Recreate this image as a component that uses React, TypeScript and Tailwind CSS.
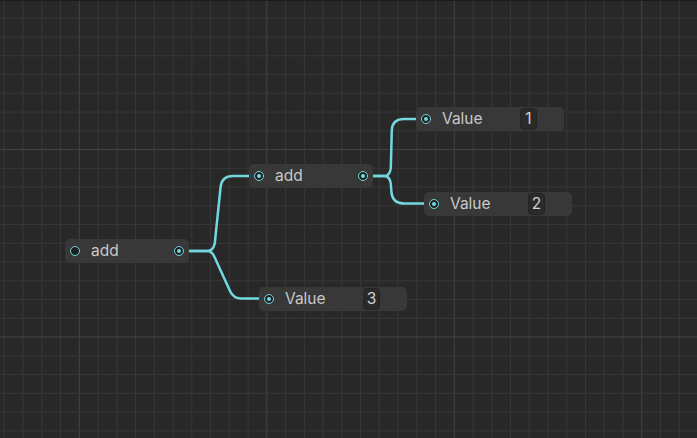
import React from "react";

const W = 697;
const H = 438;
const STEP = 18.75;

function Grid() {
  const vx: { x: number; major: boolean }[] = [];
  for (let k = -1; k < 40; k++) {
    const x = 4.3 + STEP * k;
    if (x < -2 || x > W + 2) continue;
    vx.push({ x, major: (k - 4) % 10 === 0 });
  }
  const hy: { y: number; major: boolean }[] = [];
  for (let k = 0; k < 26; k++) {
    const y = -0.45 + STEP * k;
    if (y < -2 || y > H + 2) continue;
    hy.push({ y, major: (k - 8) % 10 === 0 });
  }
  return (
    <svg className="absolute inset-0" width={W} height={H}>
      {vx.map((l, i) => (
        <line
          key={"v" + i}
          x1={l.x}
          x2={l.x}
          y1={0}
          y2={H}
          stroke={l.major ? "#434343" : "#373737"}
          strokeWidth={1}
        />
      ))}
      {hy.map((l, i) => (
        <line
          key={"h" + i}
          y1={l.y}
          y2={l.y}
          x1={0}
          x2={W}
          stroke={l.major ? "#434343" : "#373737"}
          strokeWidth={1}
        />
      ))}
      <line x1={0} x2={W} y1={0.5} y2={0.5} stroke="#1c1c1c" strokeWidth={1} />
    </svg>
  );
}

function Wires() {
  const c = "#72d8df";
  return (
    <svg className="absolute inset-0" width={W} height={H} fill="none">
      <path
        d="M180 251 L207 251 Q213.5 251 214.8 243 L220.6 187 Q221.8 176 233 176 L258 176"
        stroke={c}
        strokeWidth={2.5}
        strokeLinecap="round"
        strokeLinejoin="round"
      />
      <path
        d="M180 251 L207 251 Q212 251 214.5 257 L230 291 Q233.5 298.5 241 298.5 L268 298.5"
        stroke={c}
        strokeWidth={2.5}
        strokeLinecap="round"
        strokeLinejoin="round"
      />
      <path
        d="M363 176 L384 176 Q390 176 390.8 168 L391.8 130 Q392.5 119 404 119 L425 119"
        stroke={c}
        strokeWidth={2.5}
        strokeLinecap="round"
        strokeLinejoin="round"
      />
      <path
        d="M363 176 L384 176 Q390 176 390.8 184 L391.5 193 Q393 203.5 404 203.5 L433 203.5"
        stroke={c}
        strokeWidth={2.5}
        strokeLinecap="round"
        strokeLinejoin="round"
      />
    </svg>
  );
}

function Port({ connected }: { connected: boolean }) {
  return (
    <div className="w-[10px] h-[10px] shrink-0 rounded-full border-[1.5px] border-[#72d8df] bg-[#1f1f1f] flex items-center justify-center">
      {connected ? <div className="w-[4.5px] h-[4.5px] rounded-full bg-[#72d8df]" /> : null}
    </div>
  );
}

function AddNode({
  left,
  top,
  inConnected,
}: {
  left: number;
  top: number;
  inConnected: boolean;
}) {
  return (
    <div
      className="absolute flex items-center h-[24px] w-[124px] rounded-[5px] bg-[#383838] pl-[5px] pr-[5px] text-[15.5px] text-[#c8c8c8]"
      style={{ left, top }}
    >
      <Port connected={inConnected} />
      <span className="ml-[11px] flex-1 leading-none">add</span>
      <Port connected={true} />
    </div>
  );
}

function ValueNode({ left, top, value }: { left: number; top: number; value: string }) {
  return (
    <div
      className="absolute flex items-center h-[24px] w-[148px] rounded-[5px] bg-[#383838] pl-[5px] text-[15.5px] text-[#c8c8c8]"
      style={{ left, top }}
    >
      <Port connected={true} />
      <span className="ml-[11px] w-[78px] leading-none">Value</span>
      <div className="w-[17px] h-[22px] rounded-[4px] bg-[#2a2a2a] border border-[#242424] flex items-center justify-center text-[#d2d2d2] leading-none">
        {value}
      </div>
    </div>
  );
}

export default function App() {
  return (
    <div
      className="relative w-[697px] h-[438px] overflow-hidden bg-[#282828]"
      style={{ fontFamily: "Inter, 'Liberation Sans', sans-serif" }}
    >
      <Grid />
      <Wires />
      <AddNode left={65} top={239} inConnected={false} />
      <AddNode left={249} top={164} inConnected={true} />
      <ValueNode left={416} top={107} value="1" />
      <ValueNode left={424} top={192} value="2" />
      <ValueNode left={259} top={287} value="3" />
    </div>
  );
}
